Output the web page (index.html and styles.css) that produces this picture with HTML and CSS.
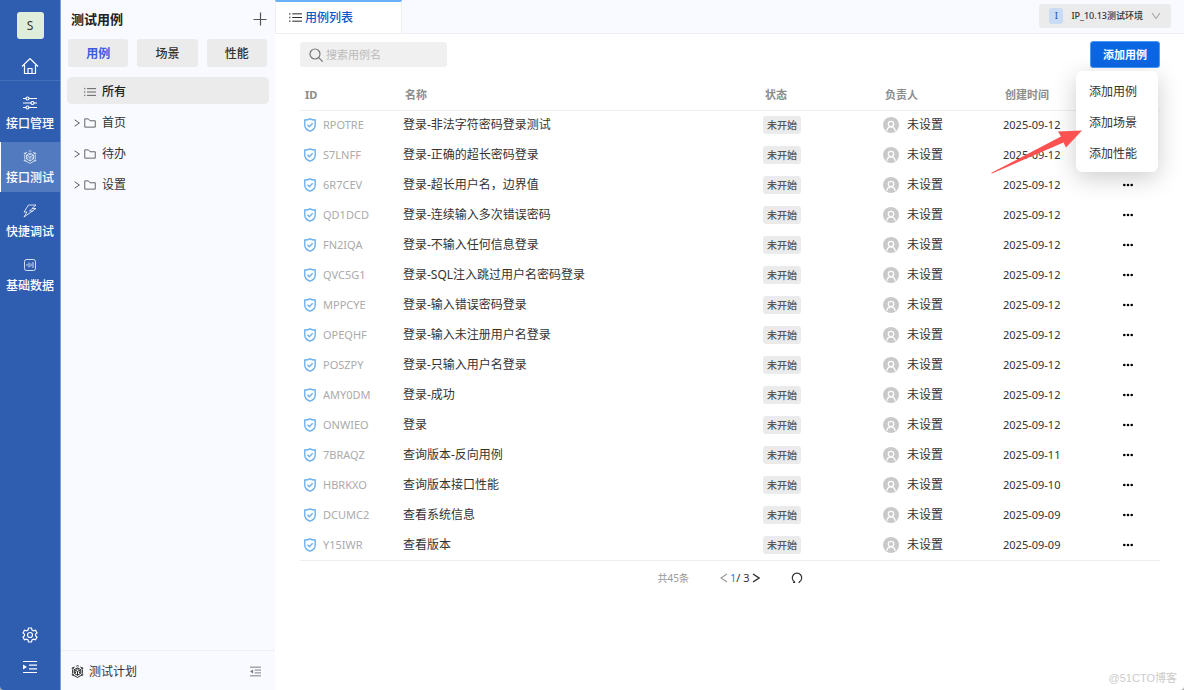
FILE: index.html
```html
<!DOCTYPE html>
<html lang="zh-CN">
<head>
    <meta charset="UTF-8">
    <meta name="viewport" content="width=device-width, initial-scale=1.0">
    <title>测试用例</title>
    <link rel="stylesheet" href="styles.css">
</head>
<body>
    <!-- shared icons -->
    <svg class="icon-defs" aria-hidden="true">
        <symbol id="i-list" viewBox="0 0 16 16"><path d="M1 2.500v2M1 7v2M1 11.500v2M4 3.500h12M4 8h12M4 12.500h12"/></symbol>
        <symbol id="i-folder" viewBox="0 0 16 16"><path d="M1 13.500v-11h5l2 2.500h7v8.500z"/></symbol>
        <symbol id="i-right" viewBox="0 0 10 10"><path d="M2 1l6 4-6 4"/></symbol>
        <symbol id="i-cube" viewBox="0 0 16 16">
            <path d="M6.500 1.500L8 .800l1.500.700M4.500 2.500L2.500 3.800M11.500 2.500l2 1.300M2 5.500v5M14 5.500v5M2.500 12.300L8 15.300l5.500-3"/>
            <path d="M8 3.500l4 2.200v4.600l-4 2.300-4-2.300V5.700zM4 5.700l4 2.300 4-2.300M8 8v4.600M5.500 8v2M10.500 8v2M6.500 5.500L8 4.800l1.500.7"/>
            <circle cx="2.200" cy="4" r=".8"/><circle cx="13.800" cy="4" r=".8"/><circle cx="2.200" cy="12" r=".8"/><circle cx="13.800" cy="12" r=".8"/>
        </symbol>
        <symbol id="i-shield" viewBox="0 0 14 14"><path d="M7 .9c1.600.9 3.300 1.100 5.200 1.100v5.200c0 3-2.400 4.900-5.200 6-2.800-1.100-5.200-3-5.200-6V2C3.700 2 5.400 1.800 7 .9z"/><path d="M4.500 6.800l1.900 1.900 3.300-3.400"/></symbol>
        <symbol id="i-user" viewBox="0 0 16 16"><circle cx="8" cy="8" r="8" fill="#c9c9c9" stroke="none"/><circle cx="8" cy="7" r="2.700"/><path d="M3.800 14c.3-2.600 2-4.100 4.200-4.100s3.900 1.500 4.200 4.100"/></symbol>
    </svg>

    <div class="app">
        <nav class="sidebar">
            <div class="logo">S</div>
            <a href="#" class="home" aria-label="首页">
                <svg class="icon" width="18" height="18" viewBox="0 0 18 18"><path d="M1 9.500L9 1.500l8 8M3.500 8v8.500h11V8M7 16.500v-5h4v5"/></svg>
            </a>
            <div class="nav-list">
                <a href="#" class="nav-item">
                    <svg class="icon" width="14" height="14" viewBox="0 0 14 14"><path d="M0 2.500h3M6 2.500h8M0 7h8M11 7h3M0 11.500h3M6 11.500h8"/><circle cx="4.500" cy="2.500" r="1.500"/><circle cx="9.500" cy="7" r="1.500"/><circle cx="4.500" cy="11.500" r="1.500"/></svg>
                    <span>接口管理</span>
                </a>
                <a href="#" class="nav-item active">
                    <svg class="icon thin" width="14" height="14"><use href="#i-cube"/></svg>
                    <span>接口测试</span>
                </a>
                <a href="#" class="nav-item">
                    <svg class="icon thin" width="14" height="14" viewBox="0 0 14 14"><path d="M5.500 1H13L9 4.500h4L1 13l3-5H1zM9 4.500L6.500 7H10"/></svg>
                    <span>快捷调试</span>
                </a>
                <a href="#" class="nav-item">
                    <svg class="icon thin" width="14" height="14" viewBox="0 0 14 14"><rect x="1.500" y="1.500" width="11" height="11" rx="2"/><path d="M4 6v2M6 4.500v5M8 5.500v3M10 4v6"/></svg>
                    <span>基础数据</span>
                </a>
            </div>
            <div class="nav-bottom">
                <button class="icon-btn" aria-label="设置">
                    <svg class="icon" width="16" height="16" viewBox="0 0 16 16"><path d="M6.500 1h3l.5 2 1.500.9 2-.6 1.500 2.600L13.500 7.300v1.400l1.500 1.400-1.500 2.600-2-.6-1.500.9-.5 2h-3l-.5-2-1.500-.9-2 .6L1 10.100l1.500-1.400V7.300L1 5.900l1.500-2.600 2 .6L6 3z"/><circle cx="8" cy="8" r="2.500"/></svg>
                </button>
                <button class="icon-btn" aria-label="展开菜单">
                    <svg class="icon" width="14" height="14" viewBox="0 0 14 14"><path d="M0 1.500h14M6 5.200h8M6 8.800h8M0 12.500h14"/><path d="M0 4.500v5L4 7z" class="fill"/></svg>
                </button>
            </div>
        </nav>

        <aside class="panel">
            <div class="panel-head">
                <h1>测试用例</h1>
                <button class="icon-btn" aria-label="新增">
                    <svg class="icon" width="14" height="14" viewBox="0 0 14 14"><path d="M0.500 7.500h13M7.500 .5v13"/></svg>
                </button>
            </div>
            <div class="type-tabs">
                <button class="type-tab active">用例</button>
                <button class="type-tab">场景</button>
                <button class="type-tab">性能</button>
            </div>
            <ul class="tree">
                <li class="selected"><svg class="icon" width="12" height="12"><use href="#i-list"/></svg>所有</li>
                <li><svg class="icon arrow" width="8" height="10"><use href="#i-right"/></svg><svg class="icon" width="12" height="12"><use href="#i-folder"/></svg>首页</li>
                <li><svg class="icon arrow" width="8" height="10"><use href="#i-right"/></svg><svg class="icon" width="12" height="12"><use href="#i-folder"/></svg>待办</li>
                <li><svg class="icon arrow" width="8" height="10"><use href="#i-right"/></svg><svg class="icon" width="12" height="12"><use href="#i-folder"/></svg>设置</li>
            </ul>
            <div class="panel-foot">
                <a href="#"><svg class="icon plan" width="13" height="13"><use href="#i-cube"/></svg>测试计划</a>
                <button class="icon-btn" aria-label="收起">
                    <svg class="icon" width="11" height="11" viewBox="0 0 14 14"><path d="M0 1.500h14M6 5.200h8M6 8.800h8M0 12.500h14"/><path d="M4 4.500v5L0 7z" class="fill"/></svg>
                </button>
            </div>
        </aside>

        <main class="main">
            <header class="topbar">
                <a href="#" class="page-tab"><svg class="icon" width="13" height="13"><use href="#i-list"/></svg>用例列表</a>
                <button class="env">
                    <span class="env-badge">I</span>
                    <span class="env-name">IP_10.13测试环境</span>
                    <svg class="icon" width="10" height="8" viewBox="0 0 10 8"><path d="M1 1l4 5.500L9 1"/></svg>
                </button>
            </header>

            <section class="content">
                <div class="toolbar">
                    <label class="search">
                        <svg class="icon" width="14" height="14" viewBox="0 0 14 14"><circle cx="6" cy="6" r="5"/><path d="M9.700 9.700l4 4"/></svg>
                        <input type="text" placeholder="搜索用例名" aria-label="搜索用例名">
                    </label>
                    <div class="add">
                        <button class="add-btn">添加用例</button>
                        <div class="menu">
                            <button>添加用例</button>
                            <button>添加场景</button>
                            <button>添加性能</button>
                        </div>
                        <svg class="pointer" width="92" height="46" viewBox="0 0 92 46"><path d="M0 44L70 7.500 67 2.500 91 1.500 75 18.500 72.500 13.500 1 44.500z"/></svg>
                    </div>
                </div>

                <table>
                    <colgroup><col class="c-id"><col><col class="c-status"><col class="c-owner"><col class="c-time"><col class="c-more"></colgroup>
                    <thead>
                        <tr><th>ID</th><th>名称</th><th>状态</th><th>负责人</th><th>创建时间</th><th></th></tr>
                    </thead>
                    <tbody id="case-list"></tbody>
                </table>

                <div class="pager">
                    <span class="total">共45条</span>
                    <div class="pages">
                        <button class="icon-btn prev" aria-label="上一页"><svg class="icon" width="8" height="10" viewBox="0 0 8 10"><path d="M7 1L1 5l6 4"/></svg></button>
                        <span><b>1</b>/ 3</span>
                        <button class="icon-btn" aria-label="下一页"><svg class="icon bold" width="8" height="10" viewBox="0 0 8 10"><path d="M1 1l6 4-6 4"/></svg></button>
                    </div>
                    <button class="icon-btn" aria-label="刷新"><svg class="icon" width="12" height="12" viewBox="0 0 12 12"><path d="M2 10.500h1.500V9.800A4.700 4.700 0 1 1 8.500 9.800L7.800 10.800"/></svg></button>
                </div>
            </section>
            <div class="watermark">@51CTO博客</div>
        </main>
    </div>

    <script>
        const cases = [
            ['RPOTRE', '登录-非法字符密码登录测试', '2025-09-12'],
            ['S7LNFF', '登录-正确的超长密码登录', '2025-09-12'],
            ['6R7CEV', '登录-超长用户名，边界值', '2025-09-12'],
            ['QD1DCD', '登录-连续输入多次错误密码', '2025-09-12'],
            ['FN2IQA', '登录-不输入任何信息登录', '2025-09-12'],
            ['QVC5G1', '登录-SQL注入跳过用户名密码登录', '2025-09-12'],
            ['MPPCYE', '登录-输入错误密码登录', '2025-09-12'],
            ['OPEQHF', '登录-输入未注册用户名登录', '2025-09-12'],
            ['POSZPY', '登录-只输入用户名登录', '2025-09-12'],
            ['AMY0DM', '登录-成功', '2025-09-12'],
            ['ONWIEO', '登录', '2025-09-12'],
            ['7BRAQZ', '查询版本-反向用例', '2025-09-11'],
            ['HBRKXO', '查询版本接口性能', '2025-09-10'],
            ['DCUMC2', '查看系统信息', '2025-09-09'],
            ['Y15IWR', '查看版本', '2025-09-09']
        ];

        document.getElementById('case-list').innerHTML = cases.map(([id, name, time]) => `
            <tr>
                <td><div class="case-id"><svg class="icon shield" width="14" height="14"><use href="#i-shield"/></svg>${id}</div></td>
                <td>${name}</td>
                <td><span class="tag">未开始</span></td>
                <td><div class="owner"><svg class="icon avatar" width="16" height="16"><use href="#i-user"/></svg>未设置</div></td>
                <td class="time">${time}</td>
                <td class="more"><button class="icon-btn" aria-label="更多"><svg width="10" height="4" viewBox="0 0 10 4"><circle cx="1.300" cy="2" r="1.300"/><circle cx="5" cy="2" r="1.300"/><circle cx="8.700" cy="2" r="1.300"/></svg></button></td>
            </tr>`).join('');
    </script>
</body>
</html>
```
FILE: styles.css
```css
:root {
    --blue: #2f5eb1;
    --primary: #0b66e4;
    --panel: #f9faff;
    --gray: #ebebeb;
    --line: #efeff1;
    --text: #333;
    --muted: #999;
}

* {
    box-sizing: border-box;
}

body {
    margin: 0;
    background: #aaa;
    color: var(--text);
    font-family: "Noto Sans", "Noto Sans CJK SC", sans-serif;
    font-size: 12px;
    line-height: 18px;
}

a {
    color: inherit;
    text-decoration: none;
}

button,
input {
    font: inherit;
    color: inherit;
    border: 0;
    padding: 0;
    background: none;
}

.icon-defs {
    position: absolute;
    width: 0;
    height: 0;
}

.icon {
    display: block;
    flex: none;
    fill: none;
    stroke: currentColor;
    stroke-width: 1.2;
}

.icon.thin {
    stroke-width: 0.8;
}

.icon.bold {
    stroke-width: 1.5;
}

.icon .fill {
    fill: currentColor;
    stroke: none;
}

.icon-btn {
    display: flex;
    align-items: center;
    justify-content: center;
}

.app {
    display: flex;
    min-height: 100vh;
    background: #fff;
    border-radius: 0 0 4px 4px;
    overflow: hidden;
}

/* left navigation */
.sidebar {
    width: 61px;
    flex: none;
    display: flex;
    flex-direction: column;
    background: var(--blue);
    color: #fff;
    border-right: 1px solid #7f9dd0;
}

.logo {
    width: 27px;
    height: 27px;
    margin: 12px auto 0;
    border-radius: 3px;
    background: #dfeedb;
    color: #333;
    line-height: 27px;
    text-align: center;
}

.home {
    display: flex;
    justify-content: center;
    padding: 18px 0 5px;
    border-bottom: 1px solid #4470bb;
}

.nav-list {
    display: flex;
    flex-direction: column;
    gap: 4px;
    padding-top: 7px;
}

.nav-item {
    height: 50px;
    display: flex;
    flex-direction: column;
    align-items: center;
    gap: 5px;
    padding-top: 8px;
    font-weight: 500;
    white-space: nowrap;
}

.nav-item.active {
    background: #527bbf;
    box-shadow: inset 1px 0 #fff;
}

.nav-bottom {
    margin-top: auto;
    display: flex;
    flex-direction: column;
    align-items: center;
    gap: 17px;
    padding-bottom: 16px;
}

/* case tree */
.panel {
    width: 214px;
    flex: none;
    display: flex;
    flex-direction: column;
    background: var(--panel);
}

.panel-head {
    display: flex;
    align-items: center;
    justify-content: space-between;
    padding: 10px 8px 11px 10px;
}

.panel-head h1 {
    margin: 0;
    font-size: 13px;
    line-height: 18px;
    color: #222;
}

.panel-head .icon-btn {
    color: #555;
}

.type-tabs {
    display: grid;
    grid-template-columns: repeat(3, 1fr);
    gap: 9px;
    padding: 0 8px 0 7px;
}

.type-tab {
    height: 28px;
    padding-top: 1px;
    border-radius: 3px;
    background: var(--gray);
    font-weight: 500;
}

.type-tab.active {
    color: #3b5be0;
    font-weight: 700;
}

.tree {
    list-style: none;
    margin: 10px 6px 0;
    padding: 0;
    display: flex;
    flex-direction: column;
    gap: 4px;
}

.tree li {
    height: 27px;
    display: flex;
    align-items: center;
    padding: 2px 0 0 6px;
    border-radius: 5px;
    gap: 6px;
}

.tree .arrow {
    margin-right: -3px;
}

.tree li .icon {
    color: #555;
}

.tree .selected {
    padding-left: 17px;
    background: var(--gray);
    color: #222;
    font-weight: 500;
}

.panel-foot {
    margin-top: auto;
    display: flex;
    align-items: center;
    justify-content: space-between;
    height: 40px;
    padding: 2px 14px 0 10px;
    border-top: 1px solid var(--line);
}

.panel-foot a {
    display: flex;
    align-items: center;
    gap: 5px;
}

.panel-foot .plan {
    color: #222;
}

.panel-foot .icon-btn {
    color: #777;
}

/* main area */
.main {
    flex: 1;
    min-width: 0;
    display: flex;
    flex-direction: column;
}

.topbar {
    height: 34px;
    display: flex;
    justify-content: space-between;
    background: var(--panel);
    border-bottom: 1px solid var(--line);
}

.page-tab {
    display: flex;
    align-items: center;
    gap: 3px;
    width: 127px;
    height: 33px;
    padding-left: 13px;
    background: #fff;
    border-top: 2px solid #69b1fa;
    border-left: 1px solid var(--line);
    border-right: 1px solid var(--line);
    color: #0b58cc;
    font-weight: 500;
}

.page-tab .icon {
    color: #222;
}

.env {
    display: flex;
    align-items: center;
    gap: 8px;
    height: 24px;
    margin: 4px 13px 0 0;
    padding: 0 10px;
    border-radius: 3px;
    background: var(--gray);
    font-size: 9px;
    font-weight: 500;
}

.env-badge {
    width: 14px;
    height: 16px;
    border-radius: 3px;
    background: #c9dbf5;
    line-height: 16px;
    color: #2f5eb1;
}

.env .icon {
    color: #aaa;
}

.content {
    padding: 7px 24px 0 25px;
}

.toolbar {
    display: flex;
    align-items: center;
    justify-content: space-between;
}

.search {
    display: flex;
    align-items: center;
    gap: 3px;
    width: 147px;
    height: 25px;
    padding: 0 9px;
    border-radius: 3px;
    background: #f0f0f0;
    color: #777;
    font-size: 11px;
}

.search input {
    flex: 1;
    min-width: 0;
    outline: 0;
}

.search input::placeholder {
    color: #bbb;
}

.add {
    position: relative;
}

.add-btn {
    display: block;
    width: 70px;
    height: 27px;
    border: 1px solid #4a9bf7;
    border-radius: 3px;
    background: var(--primary);
    color: #fff;
    font-size: 11px;
    font-weight: 700;
}

.menu {
    position: absolute;
    top: 30px;
    right: 2px;
    width: 82px;
    padding: 5px 0 3px;
    border-radius: 6px;
    background: #fff;
    box-shadow: 0 6px 24px rgba(0, 0, 0, 0.2);
}

.menu button {
    display: block;
    width: 100%;
    height: 31px;
    padding-left: 13px;
    text-align: left;
}

/* callout arrow over the open menu */
.pointer {
    position: absolute;
    top: 88px;
    right: 77px;
    fill: #fb5151;
}

table {
    width: 100%;
    margin-top: 13px;
    table-layout: fixed;
    border-collapse: collapse;
    border-bottom: 1px solid var(--line);
}

.c-id {
    width: 100px;
}

.c-status,
.c-owner {
    width: 120px;
}

.c-time {
    width: 96px;
}

.c-more {
    width: 64px;
}

th {
    height: 29px;
    padding: 0 5px;
    border-bottom: 1px solid var(--line);
    color: #8c8c8c;
    font-size: 11px;
    font-weight: 700;
    text-align: left;
}

td {
    height: 30px;
    padding: 0 3px;
    white-space: nowrap;
}

.case-id {
    display: flex;
    align-items: center;
    gap: 6px;
    color: #aaa;
    font-size: 11px;
}

.shield {
    color: #6bb0ee;
    stroke-width: 1.4;
}

.tag {
    display: inline-block;
    height: 18px;
    padding: 0 4px;
    border-radius: 3px;
    background: var(--gray);
    color: #555;
    font-size: 10px;
    font-weight: 500;
}

.owner {
    display: flex;
    align-items: center;
    gap: 8px;
}

.avatar {
    color: #fff;
}

.time {
    font-size: 11px;
}

.more .icon-btn {
    margin: 0 auto;
}

.pager {
    display: flex;
    align-items: center;
    justify-content: center;
    height: 35px;
    gap: 31px;
}

.total {
    color: var(--muted);
    font-size: 10px;
}

.pages {
    display: flex;
    align-items: center;
    gap: 2px;
    font-size: 11px;
}

.pages b {
    color: #3b7be8;
    font-weight: 400;
}

.prev {
    color: #999;
}

.watermark {
    margin-top: auto;
    padding: 0 7px 3px;
    color: #ccc;
    font-family: "Liberation Sans", "Noto Sans CJK SC", sans-serif;
    font-size: 11px;
    text-align: right;
}
```
